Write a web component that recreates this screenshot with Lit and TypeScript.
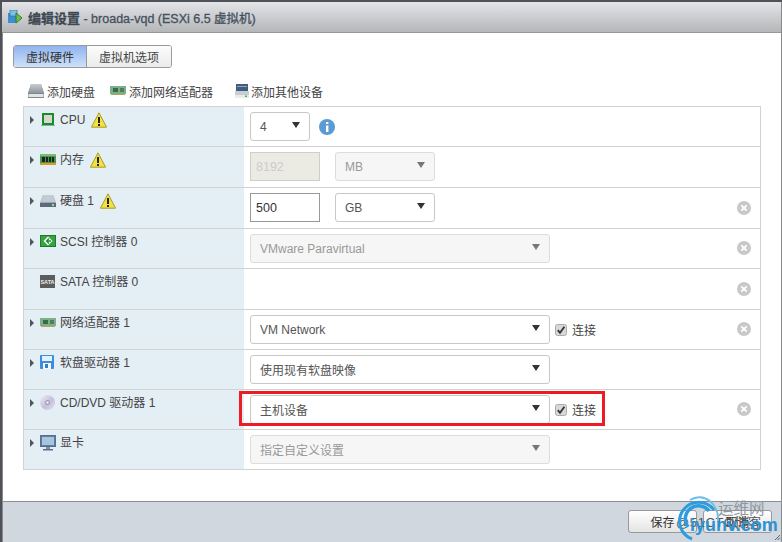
import { LitElement, html, css, svg } from "lit";
import { customElement } from "lit/decorators.js";

const icons: Record<string, any> = {
  cpu: svg`<rect x="2" y="1" width="12" height="12" fill="#1d8a2e"/><rect x="4" y="3" width="8" height="8" fill="#d6d8d0"/><rect x="1" y="13" width="14" height="1" fill="#7fb98a"/>`,
  mem: svg`<rect x="0" y="2" width="16" height="10" fill="#3f9a4a"/><rect x="0" y="2" width="16" height="2" fill="#7dbb78"/><rect x="2" y="5" width="3" height="5" fill="#222"/><rect x="6" y="5" width="2" height="5" fill="#222"/><rect x="9" y="5" width="2" height="5" fill="#222"/><rect x="12" y="5" width="2" height="5" fill="#222"/><rect x="0" y="11" width="16" height="2" fill="#e0982e"/>`,
  disk: svg`<path d="M3 2h10l3 8v4H0v-4z" fill="#9aa6b2"/><path d="M3 2h10l2 7H1z" fill="#c2cad2"/><rect x="0" y="10" width="16" height="4" fill="#5d6a78"/><rect x="12" y="11" width="2" height="2" fill="#8fe08f"/>`,
  scsi: svg`<rect x="0.500" y="1.500" width="15" height="11" fill="#35a53f" stroke="#1f7a2a"/><path d="M8 2.500L12.500 7 8 11.500 3.500 7z" fill="#fff"/><path d="M9 4.500L6.500 7 9 9.500M6.500 7H11" fill="none" stroke="#1f8a2d" stroke-width="1.300"/>`,
  nic: svg`<rect x="0" y="3" width="16" height="8" fill="#7db08a"/><rect x="3" y="5" width="5" height="4" fill="#3a6b48"/><rect x="10" y="5" width="4" height="4" fill="#4e7f5c"/><rect x="1" y="11" width="14" height="1" fill="#b8a25a"/>`,
  floppy: svg`<rect x="0" y="0" width="14" height="14" rx="1" fill="#3a8de0"/><rect x="2" y="1" width="10" height="5" fill="#e4f1fd"/><rect x="3" y="8" width="8" height="6" fill="#f4f8fc"/><rect x="5" y="9" width="3" height="4" fill="#3a7cc4"/>`,
  cd: svg`<defs><linearGradient id="cdg" x1="0" y1="0" x2="1" y2="1"><stop offset="0" stop-color="#eeeef2"/><stop offset=".55" stop-color="#c6bede"/><stop offset="1" stop-color="#e4e4e8"/></linearGradient></defs><circle cx="7.500" cy="7.500" r="7.500" fill="url(#cdg)"/><circle cx="7.500" cy="7.500" r="2.500" fill="#a0a0b4"/><circle cx="7.500" cy="7.500" r="1.200" fill="#f0f0f4"/>`,
  mon: svg`<rect x="0.500" y="0.500" width="15" height="11" fill="#5a7ea8" stroke="#56708e"/><rect x="2" y="2" width="12" height="8" fill="#a9c4de"/><rect x="6" y="12" width="4" height="2" fill="#7f93a8"/><rect x="3" y="14" width="10" height="1.500" fill="#56708e"/>`,
  hdAdd: svg`<defs><linearGradient id="hdg" x1="0" y1="0" x2="0" y2="1"><stop offset="0" stop-color="#c8ccd0"/><stop offset="1" stop-color="#8e969e"/></linearGradient></defs><path d="M3 1h10l3 9v5H0v-5z" fill="#7f8890"/><path d="M3 1h10l2.500 9H.5z" fill="url(#hdg)"/><rect x="0.500" y="11" width="15" height="3" fill="#e2e4e6"/>`,
  other: svg`<rect x="2" y="1" width="12" height="7" fill="#3f5d7c"/><rect x="3" y="3" width="10" height="1" fill="#8fa9c4"/><rect x="1" y="8" width="14" height="7" fill="#c9ced4"/><rect x="1" y="12" width="14" height="3" fill="#e9ebed"/><rect x="11" y="12.500" width="2" height="1.500" fill="#4cae50"/>`,
};

const warn = html`<svg class="warn" viewBox="0 0 16 16"><path d="M8 .8L15.600 15.200H.4z" fill="#f2e23a" stroke="#a89a30"/><rect x="7" y="5" width="2" height="6" fill="#222"/><rect x="7" y="12" width="2" height="2" fill="#222"/></svg>`;

type Row = { icon?: string; label: string; warn?: boolean; tall?: boolean; caret?: boolean; x?: boolean; kind: string };
const rows: Row[] = [
  { icon: "cpu", label: "CPU", warn: true, kind: "cpu" },
  { icon: "mem", label: "内存", warn: true, tall: true, kind: "mem" },
  { icon: "disk", label: "硬盘 1", warn: true, tall: true, x: true, kind: "disk" },
  { icon: "scsi", label: "SCSI 控制器 0", x: true, kind: "scsi" },
  { icon: "sata", label: "SATA 控制器 0", tall: true, x: true, caret: false, kind: "none" },
  { icon: "nic", label: "网络适配器 1", x: true, kind: "nic" },
  { icon: "floppy", label: "软盘驱动器 1", kind: "floppy" },
  { icon: "cd", label: "CD/DVD 驱动器 1", x: true, kind: "cd" },
  { icon: "mon", label: "显卡", kind: "video" },
];

@customElement("app-root")
export class AppRoot extends LitElement {
  static styles = css`
    :host { display: block; width: 782px; height: 542px; background: #50525a; overflow: hidden; position: relative;
      font-family: "Liberation Sans", "Noto Sans CJK SC", sans-serif; font-size: 12px; color: #444; }
    * { box-sizing: border-box; }
    .dialog { margin: 2px 0 0 2px; height: 540px; display: flex; flex-direction: column; background: #fff;
      border-left: 1px solid #8a8a8a; border-right: 1px solid #8a8a8a; }
    .title { height: 31px; flex: none; display: flex; align-items: center; gap: 5px; padding-left: 6px;
      background: linear-gradient(#e3e4e8, #b4b6b8); border-bottom: 1px solid #979797; margin-left: -1px; }
    .title svg { width: 15px; height: 15px; flex: none; margin-top: 1px; }
    .title span { font-size: 12.500px; color: #44505c; -webkit-text-stroke: .3px #44505c; white-space: pre; }
    .title b { font-size: 13px; color: #3c4650; }
    .body { flex: 1; padding: 12px 0 0 10px; }
    .tabs { display: flex; height: 23px; width: 159px; border: 1px solid #9a9a9a; border-radius: 3px; overflow: hidden; }
    .tab { flex: none; width: 73px; display: flex; align-items: center; justify-content: center; background: linear-gradient(#fcfcfc, #ebebeb); color: #444; }
    .tab.on { background: linear-gradient(#8fb4ee, #cfe1fa); border-right: 1px solid #9a9a9a; color: #333; }
    .tab + .tab { flex: 1; }
    .toolbar { height: 38px; padding: 9px 0 0 15px; display: flex; align-items: flex-start; }
    .tool { display: flex; align-items: center; height: 28px; gap: 3px; color: #444; margin-right: 15px; }
    .tool svg { width: 16px; height: 16px; flex: none; }
    .tool:nth-child(2) { margin-right: 21px; }
    .tool:nth-child(3) { gap: 1px; }
    .table { width: 738px; margin-left: 10px; border: 1px solid #d2d2d2; border-bottom: 0; }
    .row { display: flex; height: 40px; border-bottom: 1px solid #d2d2d2; }
    .row.tall { height: 41px; }
    .left { width: 220px; flex: none; background: #e4eef5; display: flex; align-items: flex-start; padding: 5px 0 0 6px; }
    .caret { width: 0; height: 0; flex: none; border-left: 4px solid #555; border-top: 4px solid transparent; border-bottom: 4px solid transparent; margin: 4px 6px 0 0; }
    .nocaret { width: 10px; flex: none; }
    .ico { width: 16px; height: 16px; flex: none; margin-right: 4px; }
    .lbl { line-height: 16px; color: #444; margin-right: 6px; white-space: nowrap; }
    .warn { width: 16px; height: 16px; flex: none; margin-top: 0; }
    .right { flex: 1; position: relative; display: flex; align-items: center; padding: 0 9px 0 6px; }
    .controls { align-self: flex-start; margin-top: 5px; display: flex; align-items: center; height: 29px; }
    .select { height: 29px; display: flex; align-items: center; justify-content: space-between; border: 1px solid #c8c8c8; border-radius: 3px; background: #fff;
      padding: 0 9px 0 9px; color: #555; }
    .select::after { content: ""; width: 0; height: 0; margin-top: -3px; border-left: 4px solid transparent; border-right: 4px solid transparent; border-top: 6px solid #333; }
    .select.dis { background: #f6f6f6; border-color: #dcdcdc; color: #999; }
    .select.dis::after { border-top-color: #777; }
    .w60 { width: 60px; } .w100 { width: 100px; margin-left: 15px; } .w300 { width: 300px; }
    .input { width: 70px; height: 29px; border: 1px solid #999; padding-left: 5px; display: flex; align-items: center; color: #333; background: #fff; font-size: 12.500px; }
    .input.dis { background: #ebebe4; border-color: #cfcfc8; color: #ccc; }
    .info { width: 16px; height: 16px; margin-left: 9px; }
    .chk { width: 12px; height: 12px; margin-left: 5px; flex: none; }
    .conn { margin-left: 5px; color: #444; }
    .del { width: 14px; height: 14px; margin: -1px 0 0 auto; flex: none; }
    .redbox { position: absolute; left: -5px; top: 1px; width: 366px; height: 35px; border: 3px solid #ed1c24; }
    .footer { height: 41px; flex: none; background: #d0d7de; border-top: 1px solid #8e8e8e; display: flex; justify-content: flex-end; gap: 6px; padding: 8px 9px 0 0; }
    .btn { width: 69px; height: 23px; border: 1px solid #999; border-radius: 3px; background: linear-gradient(#fff, #e4e4e4); display: flex; align-items: center; justify-content: center; color: #333; }
    .grip { position: absolute; right: 1px; bottom: 1px; width: 7px; height: 7px; }
    .mark { position: absolute; left: 672px; top: 494px; width: 110px; height: 48px; pointer-events: none; }
    .mark svg { position: absolute; left: 6px; top: 2px; width: 44px; height: 46px; }
    .mk-cn { position: absolute; left: 46px; top: 6px; font-size: 15.500px; line-height: 18px; color: #8f979f; }
    .mk-51 { position: absolute; left: 4px; top: 21px; font-size: 13px; line-height: 16px; color: #555; white-space: nowrap; letter-spacing: .6px; }
    .mk-en { position: absolute; left: 18px; top: 20px; font-size: 18px; line-height: 22px; font-weight: bold; color: #2c93d6; white-space: nowrap; }
  `;

  private sel(text: string, w: string, dis = false) {
    return html`<div class="select ${w} ${dis ? "dis" : ""}">${text}</div>`;
  }

  private check() {
    return html`<svg class="chk" viewBox="0 0 12 12"><rect x=".5" y=".5" width="11" height="11" rx="2" fill="#d8d8d8" stroke="#aaa"/><path d="M2.800 6.200L5 8.800 9.400 2.800" fill="none" stroke="#333" stroke-width="1.800"/></svg>`;
  }

  private controls(kind: string) {
    switch (kind) {
      case "cpu":
        return html`${this.sel("4", "w60")}<svg class="info" viewBox="0 0 16 16"><circle cx="8" cy="8" r="8" fill="#5b9bd5"/><rect x="7" y="3" width="2.400" height="2" fill="#fff"/><rect x="7" y="6.500" width="2.400" height="6.500" fill="#fff"/></svg>`;
      case "mem":
        return html`<div class="input dis">8192</div>${this.sel("MB", "w100", true)}`;
      case "disk":
        return html`<div class="input">500</div>${this.sel("GB", "w100")}`;
      case "scsi":
        return this.sel("VMware Paravirtual", "w300", true);
      case "nic":
        return html`${this.sel("VM Network", "w300")}${this.check()}<span class="conn">连接</span>`;
      case "floppy":
        return this.sel("使用现有软盘映像", "w300");
      case "cd":
        return html`${this.sel("主机设备", "w300")}${this.check()}<span class="conn">连接</span>`;
      case "video":
        return this.sel("指定自定义设置", "w300", true);
    }
    return null;
  }

  private rowIcon(r: Row) {
    if (r.icon === "sata") {
      return html`<svg class="ico" viewBox="0 0 16 16"><rect x="0" y="1" width="15" height="13" fill="#5c5c5c"/><text x="7.500" y="10" font-size="5.500" font-weight="bold" fill="#eee" text-anchor="middle" font-family="Liberation Sans">SATA</text></svg>`;
    }
    return html`<svg class="ico" viewBox="0 0 16 16">${icons[r.icon!]}</svg>`;
  }

  render() {
    return html`
      <div class="dialog">
        <div class="title">
          <svg viewBox="0 0 15 15"><rect x="0" y="3" width="8" height="10" fill="#3d8fd0"/><rect x="2" y="0" width="7" height="6" fill="#7fc0e8" stroke="#2f6f9f" stroke-width=".7"/><path d="M8 3l6 5-6 5z" fill="#6cbf4a" stroke="#2f7a2a"/></svg>
          <span><b>编辑设置</b> - broada-vqd (ESXi 6.5 虚拟机)</span>
        </div>
        <div class="body">
          <div class="tabs"><div class="tab on">虚拟硬件</div><div class="tab">虚拟机选项</div></div>
          <div class="toolbar">
            <div class="tool"><svg viewBox="0 0 16 16">${icons.hdAdd}</svg>添加硬盘</div>
            <div class="tool"><svg viewBox="0 0 16 16">${icons.nic}</svg>添加网络适配器</div>
            <div class="tool"><svg viewBox="0 0 16 16">${icons.other}</svg>添加其他设备</div>
          </div>
          <div class="table">
            ${rows.map(
              (r) => html`<div class="row ${r.tall ? "tall" : ""}">
                <div class="left">
                  ${r.caret === false ? html`<span class="nocaret"></span>` : html`<span class="caret"></span>`}
                  ${this.rowIcon(r)}
                  <span class="lbl">${r.label}</span>
                  ${r.warn ? warn : null}
                </div>
                <div class="right">
                  <div class="controls">${this.controls(r.kind)}</div>
                  ${r.x
                    ? html`<svg class="del" viewBox="0 0 14 14"><circle cx="7" cy="7" r="7" fill="#c8c8c8"/><path d="M4.300 4.300l5.400 5.400M9.700 4.300l-5.400 5.400" stroke="#fff" stroke-width="1.800"/></svg>`
                    : null}
                  ${r.kind === "cd" ? html`<div class="redbox"></div>` : null}
                </div>
              </div>`
            )}
          </div>
        </div>
        <div class="footer">
          <div class="btn">保存</div>
          <div class="btn">取消</div>
        </div>
      </div>
      <svg class="grip" viewBox="0 0 7 7"><path d="M6 1L1 6M6 3.500L3.500 6M6 5.500L5.500 6" stroke="#666" stroke-width="1"/></svg>
      <div class="mark">
        <span class="mk-51">@51CTO博客</span>
        <svg viewBox="0 0 44 46"><path d="M36 14A19 19 0 1 0 14 43" fill="none" stroke="#2c9ce0" stroke-width="3"/><path d="M40 26A19 22 0 0 0 12 4" fill="none" stroke="#6fbdec" stroke-width="2"/><path d="M31 15A13 13 0 0 0 10 31" fill="none" stroke="#2c9ce0" stroke-width="3.500"/></svg>
        <span class="mk-cn">运维网</span>
        <span class="mk-en">iyunv.com</span>
      </div>
    `;
  }
}
